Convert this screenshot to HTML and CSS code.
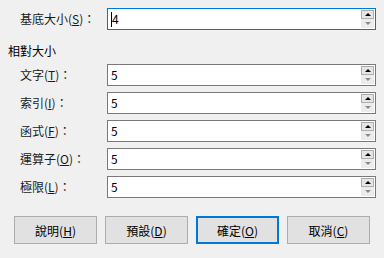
FILE: index.html
```html
<!DOCTYPE html>
<html lang="zh-Hant">
<head>
  <meta charset="UTF-8" />
  <title>字型大小</title>
  <link rel="stylesheet" href="styles.css">
</head>
<body>
  <div class="dialog">
    <div class="row">
      <label class="label">基底大小(<u>S</u>)：</label>
      <div class="spin focused">
        <span class="value"><span class="caret"></span>4</span>
        <div class="arrows"><span class="up"></span><span class="down"></span></div>
      </div>
    </div>

    <div class="section">相對大小</div>

    <div class="rows">
      <div class="row">
        <label class="label">文字(<u>T</u>)：</label>
        <div class="spin">
          <span class="value">5</span>
          <div class="arrows"><span class="up"></span><span class="down"></span></div>
        </div>
      </div>
      <div class="row">
        <label class="label">索引(<u>I</u>)：</label>
        <div class="spin">
          <span class="value">5</span>
          <div class="arrows"><span class="up"></span><span class="down"></span></div>
        </div>
      </div>
      <div class="row">
        <label class="label">函式(<u>F</u>)：</label>
        <div class="spin">
          <span class="value">5</span>
          <div class="arrows"><span class="up"></span><span class="down"></span></div>
        </div>
      </div>
      <div class="row">
        <label class="label">運算子(<u>O</u>)：</label>
        <div class="spin">
          <span class="value">5</span>
          <div class="arrows"><span class="up"></span><span class="down"></span></div>
        </div>
      </div>
      <div class="row">
        <label class="label">極限(<u>L</u>)：</label>
        <div class="spin">
          <span class="value">5</span>
          <div class="arrows"><span class="up"></span><span class="down"></span></div>
        </div>
      </div>
    </div>

    <div class="buttons">
      <button>說明(<u>H</u>)</button>
      <button>預設(<u>D</u>)</button>
      <button class="default">確定(<u>O</u>)</button>
      <button>取消(<u>C</u>)</button>
    </div>
  </div>
</body>
</html>
```

FILE: styles.css
```css
body {
  margin: 0;
  background-color: #f0f0f0;
  color: #000;
  font-family: "Noto Sans CJK TC", "Noto Sans", sans-serif;
  font-size: 12px;
}
.dialog {
  padding: 8px 8px 0 8px;
  width: 368px;
}
.row {
  display: flex;
  align-items: center;
  height: 22px;
}
.label {
  width: 99px;
  padding-left: 12px;
  box-sizing: border-box;
  line-height: 16px;
  white-space: nowrap;
  color: #1a1a1a;
}
.label u,
button u {
  text-underline-offset: 1px;
}
.spin {
  width: 269px;
  height: 22px;
  box-sizing: border-box;
  border: 1px solid #7a7a7a;
  background-color: #fff;
  display: flex;
  align-items: center;
  justify-content: space-between;
}
.spin.focused {
  border-color: #0078d7;
}
.value {
  padding-left: 3px;
  line-height: 16px;
  display: flex;
  align-items: center;
}
.caret {
  width: 1px;
  height: 15px;
  background-color: #000;
}
.arrows {
  display: flex;
  flex-direction: column;
  width: 13px;
  margin-right: 1px;
}
.arrows span {
  height: 9px;
  display: flex;
  align-items: center;
  justify-content: center;
  box-sizing: border-box;
}
.up {
  border: 1px solid #adadad;
  background-color: #e5e5e5;
}
.up::after {
  content: "";
  border-left: 3px solid transparent;
  border-right: 3px solid transparent;
  border-bottom: 3px solid #000;
}
.down {
  background-color: #ececec;
}
.down::after {
  content: "";
  border-left: 3px solid transparent;
  border-right: 3px solid transparent;
  border-top: 3px solid #8a8a8a;
}
.section {
  line-height: 16px;
  margin: 13px 0 5px 0;
}
.rows {
  display: flex;
  flex-direction: column;
  gap: 6px;
}
.buttons {
  display: flex;
  gap: 8px;
  margin: 18px 0 0 6px;
}
button {
  width: 83px;
  height: 28px;
  box-sizing: border-box;
  border: 1px solid #adadad;
  background-color: #e1e1e1;
  font-family: inherit;
  font-size: 12px;
  color: #000;
  padding: 0;
}
button.default {
  border: 2px solid #0078d7;
}
```
